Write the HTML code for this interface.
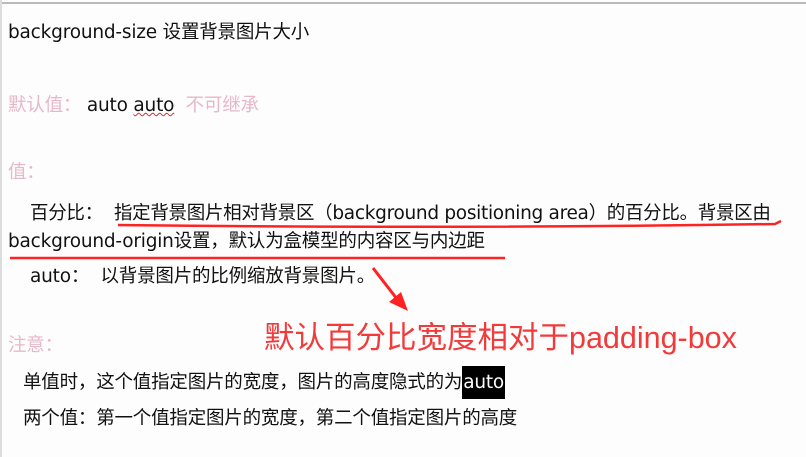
<!DOCTYPE html>
<html><head><meta charset="utf-8"><style>
body{margin:0;width:806px;height:457px;background:#fdfdfe;position:relative;overflow:hidden;font-family:"DejaVu Sans","Noto Sans CJK SC",sans-serif;color:#111}
.t{position:absolute;white-space:nowrap;font-size:18.5px;line-height:20px;letter-spacing:-0.2px}
.p{color:#e7b8c8}
</style></head><body>
<div style="position:absolute;left:0;top:2px;width:806px;height:2px;background:#bbb"></div>
<div style="position:absolute;left:0;top:0;width:2px;height:457px;background:#ddd"></div>
<div class="t" style="left:8px;top:23px">background-size 设置背景图片大小</div>
<div class="t" style="left:8px;top:96px"><span class="p">默认值：</span> auto <span style="text-decoration:underline wavy #c33;text-decoration-thickness:1px">auto</span> <span class="p">&nbsp;不可继承</span></div>
<div class="t p" style="left:8px;top:163px">值：</div>
<div class="t" style="left:30px;top:204px;letter-spacing:-0.3px">百分比： &nbsp;指定背景图片相对背景区（background positioning area）的百分比。背景区由</div>
<div class="t" style="left:8px;top:232px">background-origin设置，默认为盒模型的内容区与内边距</div>
<div class="t" style="left:30px;top:267px">auto：&nbsp; 以背景图片的比例缩放背景图片。</div>
<svg style="position:absolute;left:0;top:0" width="806" height="457">
<path d="M118 225 Q450 229 775 224 L781 221" stroke="#f22" stroke-width="2.5" fill="none"/>
<path d="M10 258 L505 258" stroke="#f22" stroke-width="2.5" fill="none"/>
<path d="M373 268 L397 299" stroke="#f22" stroke-width="3" fill="none"/>
<path d="M408 311 L389 302 L401 292 Z" fill="#f22"/>
</svg>
<div class="t" style="left:264px;top:320px;font-family:'Liberation Sans','Noto Sans CJK SC',sans-serif;letter-spacing:0;font-size:30.5px;line-height:36px;color:#f23a3a">默认百分比宽度相对于padding-box</div>
<div class="t p" style="left:8px;top:336px">注意：</div>
<div class="t" style="left:23px;top:373px">单值时，这个值指定图片的宽度，图片的高度隐式的为<span style="background:#000;color:#fff;padding:6px 1px">auto</span></div>
<div class="t" style="left:23px;top:409px">两个值：第一个值指定图片的宽度，第二个值指定图片的高度</div>
</body></html>
